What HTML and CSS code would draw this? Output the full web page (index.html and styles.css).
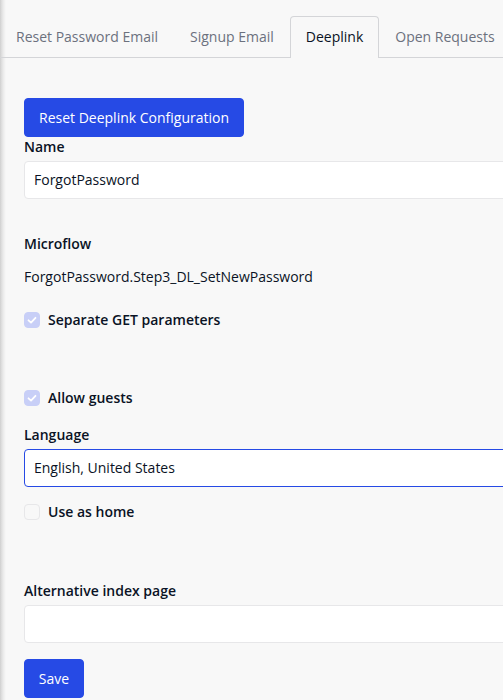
FILE: index.html
```html
<!DOCTYPE html>
<html>
<head>
<meta charset="utf-8">
<link rel="stylesheet" href="styles.css">
</head>
<body>
<div class="page">
  <ul class="tabs">
    <li class="tab">Reset Password Email</li>
    <li class="tab">Signup Email</li>
    <li class="tab active">Deeplink</li>
    <li class="tab">Open Requests</li>
  </ul>
  <div class="content">
    <button class="btn btn-reset">Reset Deeplink Configuration</button>
    <div class="label label-name">Name</div>
    <div class="input">ForgotPassword</div>
    <div class="label label-micro">Microflow</div>
    <div class="value">ForgotPassword.Step3_DL_SetNewPassword</div>
    <div class="check check-sep"><span class="box checked"><svg viewBox="0 0 16 16" width="16" height="16"><path d="M4.5 8.3 L7 10.6 L11.5 5.8" fill="none" stroke="#fff" stroke-width="1.8" stroke-linecap="round" stroke-linejoin="round"/></svg></span><span>Separate GET parameters</span></div>
    <div class="check check-guest"><span class="box checked"><svg viewBox="0 0 16 16" width="16" height="16"><path d="M4.5 8.3 L7 10.6 L11.5 5.8" fill="none" stroke="#fff" stroke-width="1.8" stroke-linecap="round" stroke-linejoin="round"/></svg></span><span>Allow guests</span></div>
    <div class="label label-lang">Language</div>
    <div class="input focused">English, United States</div>
    <div class="check check-home"><span class="box"></span><span>Use as home</span></div>
    <div class="label label-alt">Alternative index page</div>
    <div class="input"></div>
    <button class="btn btn-save">Save</button>
  </div>
</div>
</body>
</html>
```

FILE: styles.css
```css
html, body {
  margin: 0;
  padding: 0;
}
body {
  font-family: "Open Sans", "Noto Sans", sans-serif;
  font-size: 14px;
  line-height: 20px;
  color: #0a1325;
  background: linear-gradient(to right, #cfcfcf 0, #e2e2e2 2px, #efefef 4px, #f8f8f8 6px);
  height: 700px;
  overflow: hidden;
}
.page {
  width: 503px;
  overflow: hidden;
}
.tabs {
  list-style: none;
  margin: 0;
  padding: 16px 0 0 0;
  display: flex;
  border-bottom: 1px solid #d4d5d8;
  white-space: nowrap;
}
.tab {
  padding: 10px 15px 10px;
  color: #6c717e;
  border: 1px solid transparent;
  border-bottom: none;
  margin-bottom: -1px;
}
.tab.active {
  color: #0a1325;
  border-color: #d4d5d8;
  border-radius: 4px 4px 0 0;
  background: #f8f8f8;
  padding-bottom: 11px;
}
.content {
  padding: 40px 0 0 24px;
}
.btn {
  display: block;
  font-family: inherit;
  font-size: 14px;
  line-height: 20px;
  color: #fff;
  background: #264ae5;
  border: 1px solid #264ae5;
  border-radius: 4px;
  height: 39px;
  padding: 0 14px;
}
.btn-save {
  margin-top: 16px;
  width: 60px;
  padding: 0;
}
.label {
  font-weight: 600;
  height: 20px;
}
.label-name { margin-top: 0; }
.label-micro { margin-top: 35px; }
.label-lang { margin-top: 17px; }
.label-alt { margin-top: 59px; }
.input {
  margin-top: 4px;
  height: 38px;
  box-sizing: border-box;
  width: 500px;
  background: #fff;
  border: 1px solid #e7e7e9;
  border-radius: 4px;
  padding: 8px 9px;
  line-height: 20px;
}
.input.focused {
  border-color: #264ae5;
}
.value {
  margin-top: 13px;
}
.check {
  display: flex;
  align-items: center;
  gap: 8px;
  font-weight: 600;
  height: 20px;
}
.check-sep { margin-top: 23px; }
.check-guest { margin-top: 58px; }
.check-home { margin-top: 15px; }
.box {
  width: 16px;
  height: 16px;
  box-sizing: border-box;
  border-radius: 4px;
  border: 1px solid #e7e7e9;
  background: #f8f8f8;
  display: flex;
}
.box.checked {
  background: #c8cff7;
  border-color: #c8cff7;
}
.box svg {
  margin: -1px;
}
```
